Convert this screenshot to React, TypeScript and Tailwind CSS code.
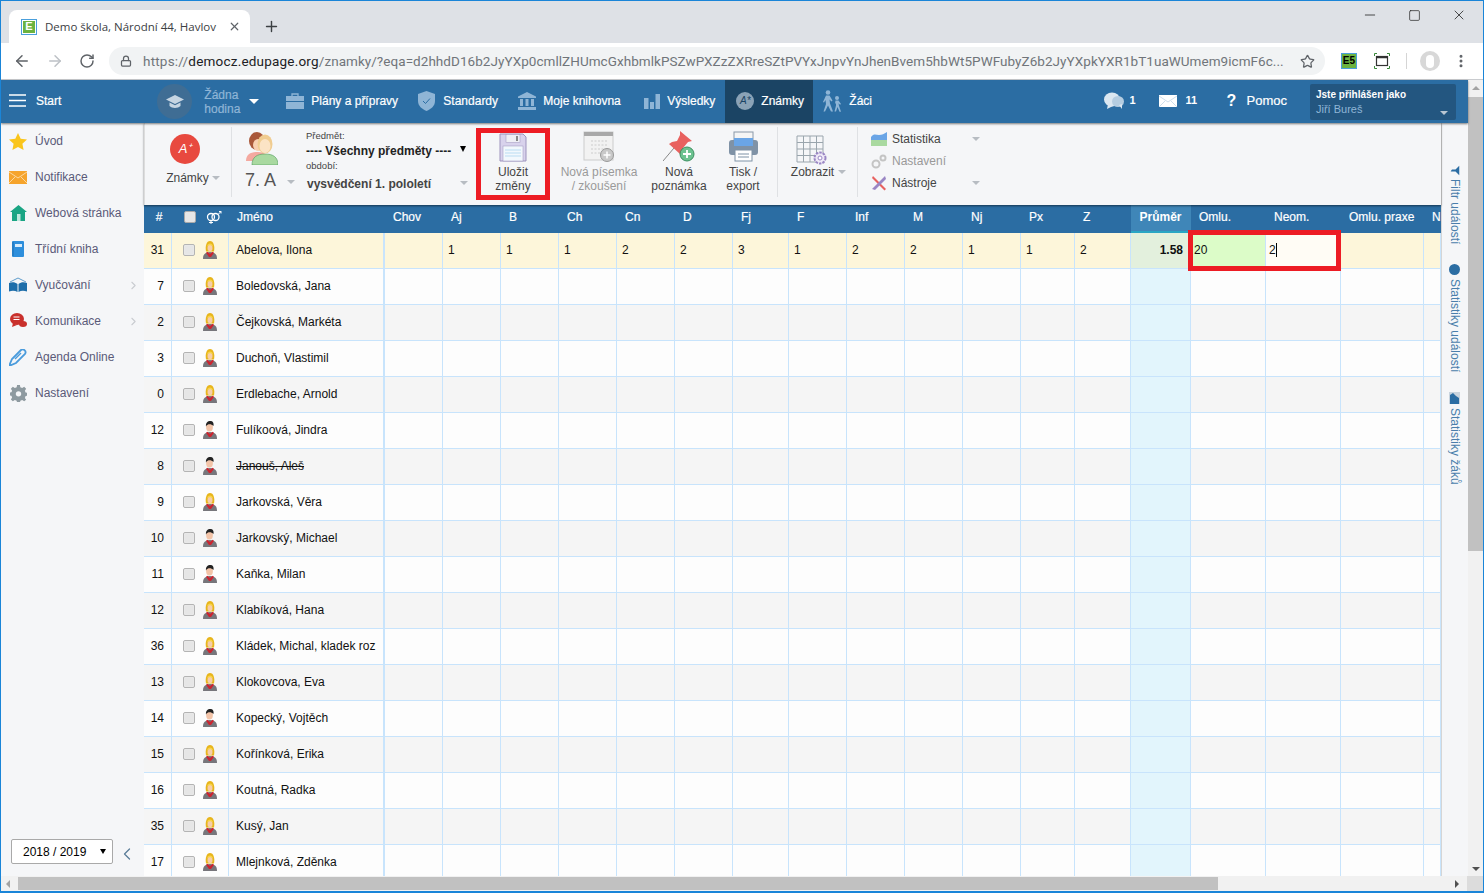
import { ArrowLeft, ArrowRight, ChevronLeft, ChevronRight, Lock, MoreVertical, Plus, RotateCw, Star, X, Minus, Square } from "lucide-react";

const sans = "font-['Liberation_Sans',Arial,sans-serif]";

const gridCols =
  "grid grid-cols-[28px_57px_156px_58px_58px_58px_58px_58px_58px_56px_58px_58px_58px_58px_54px_56px_60px_75px_75px_83px_17px]";

const subjects = ["Chov", "Aj", "B", "Ch", "Cn", "D", "Fj", "F", "Inf", "M", "Nj", "Px", "Z"];
const grades = ["", "1", "1", "1", "2", "2", "3", "1", "2", "2", "1", "1", "2"];

const students: { n: string; name: string; male?: boolean; strike?: boolean }[] = [
  { n: "7", name: "Boledovská, Jana" },
  { n: "2", name: "Čejkovská, Markéta" },
  { n: "3", name: "Duchoň, Vlastimil" },
  { n: "0", name: "Erdlebache, Arnold" },
  { n: "12", name: "Fulíkoová, Jindra", male: true },
  { n: "8", name: "Janouš, Aleš", male: true, strike: true },
  { n: "9", name: "Jarkovská, Věra" },
  { n: "10", name: "Jarkovský, Michael", male: true },
  { n: "11", name: "Kaňka, Milan", male: true },
  { n: "12", name: "Klabíková, Hana" },
  { n: "36", name: "Kládek, Michal, kladek roz" },
  { n: "13", name: "Klokovcova, Eva" },
  { n: "14", name: "Kopecký, Vojtěch", male: true },
  { n: "15", name: "Kořínková, Erika" },
  { n: "16", name: "Koutná, Radka" },
  { n: "35", name: "Kusý, Jan" },
  { n: "17", name: "Mlejnková, Zděnka" },
];

function Person({ male }: { male?: boolean }) {
  return (
    <svg width="14" height="18" viewBox="0 0 14 18">
      {male ? (
        <>
          <ellipse cx="6.500" cy="6" rx="3.400" ry="4.500" fill="#f3c4a8" />
          <path d="M3 5.500C2.500 2 4.500 0 7.500 0c2.500 0 3.500 2 3 5C9 3.500 7 3 5 3.500 4 4 3.500 4.500 3 5.500z" fill="#222" />
        </>
      ) : (
        <>
          <path d="M3 10.500C2 5 3.500 0 7 0s5 5 4 10.500z" fill="#e8b51c" />
          <ellipse cx="7" cy="7" rx="2.500" ry="3.300" fill="#f6cdaa" />
          <path d="M4 5.500C5 4 8 3.500 10 5.500 9.500 1.500 4.500 1.500 4 5.500z" fill="#f7d64a" />
        </>
      )}
      <path d="M0 18c0-4.500 1.500-6.500 7-7 5.500.5 7 2.500 7 7z" fill="#77767b" />
      <path d="M4.500 10.800L7 13l2.500-2.200 1.500 1L8 16H6L3 11.800z" fill="#cc2530" />
    </svg>
  );
}

function Check() {
  return (
    <span className="block w-[12px] h-[12px] rounded-[2px] border border-[#b4b4b4] bg-[#e6e6e6] shadow-[inset_0_0_1px_#fff]" />
  );
}

function Caret({ className = "" }: { className?: string }) {
  return (
    <span
      className={`inline-block w-0 h-0 border-l-[4px] border-r-[4px] border-t-[4px] border-l-transparent border-r-transparent border-t-[#b7bcc2] ${className}`}
    />
  );
}

function BrowserBar() {
  return (
    <div className="shrink-0">
      <div className="h-[42px] bg-[#dee1e6] flex items-end pl-[8px] relative">
        <div className="w-[241px] h-[33px] bg-white rounded-t-[8px] flex items-center pl-[12px] pr-[9px]">
          <span className="w-[16px] h-[16px] bg-[#4a9fdc] p-[1px] shrink-0">
            <span className={`flex items-center justify-center w-full h-full bg-[#6cb33f] border border-white text-white text-[11px] font-bold leading-none ${sans}`}>E</span>
          </span>
          <span className="ml-[8px] text-[11.500px] text-[#3c4043] font-['Open_Sans',sans-serif] whitespace-nowrap">Demo škola, Národní 44, Havlov</span>
          <X size={13} strokeWidth={2.2} className="text-[#5f6368] ml-auto shrink-0" />
        </div>
        <Plus size={17} strokeWidth={2} className="text-[#3c4043] ml-[13px] mb-[8px]" />
        <div className="ml-auto self-start flex items-center pt-[6px] pr-[16px] gap-[30px] text-[#222]">
          <Minus size={16} strokeWidth={1.2} />
          <Square size={13} strokeWidth={1.3} />
          <X size={16} strokeWidth={1.2} />
        </div>
      </div>
      <div className="h-[37px] bg-white flex items-center pl-[12px] border-b border-[#c9cbce]">
        <ArrowLeft size={18} strokeWidth={2} className="text-[#5f6368]" />
        <ArrowRight size={18} strokeWidth={2} className="text-[#bdc1c6] ml-[15px]" />
        <RotateCw size={16} strokeWidth={2.2} className="text-[#5f6368] ml-[15px]" />
        <div className="ml-[14px] w-[1216px] h-[28px] rounded-full bg-[#f1f3f4] flex items-center pl-[11px] pr-[10px]">
          <Lock size={12} strokeWidth={2.5} className="text-[#5f6368] shrink-0" />
          <span className="ml-[11px] text-[13.500px] tracking-[0.2px] text-[#70757a] font-['Roboto',sans-serif] whitespace-nowrap">
            https://<span className="text-[#202124]">democz.edupage.org</span>
            <span className="tracking-[0.05px]">/znamky/?eqa=d2hhdD16b2JyYXp0cmllZHUmcGxhbmlkPSZwPXZzZXRreSZtPVYxJnpvYnJhenBvem5hbWt5PWFubyZ6b2JyYXpkYXR1bT1uaWUmem9icmF6c...</span>
          </span>
          <Star size={15} strokeWidth={2} className="text-[#5f6368] ml-auto shrink-0" />
        </div>
        <span className={`ml-[16px] w-[16px] h-[16px] bg-[#6cb33f] border border-[#4a9fdc] text-[10px] font-bold leading-[14px] text-right pr-[1px] text-black ${sans}`}>E5</span>
        <svg width="16" height="16" viewBox="0 0 16 16" className="ml-[17px]">
          <path d="M.5 3V.5H3M13 .5h2.500V3M.5 13v2.500H3M13 15.500h2.500V13" fill="none" stroke="#3c8a3c" />
          <rect x="2.500" y="3.500" width="11" height="9" fill="none" stroke="#333" strokeWidth="1.200" />
          <path d="M2.500 4.500h11" stroke="#333" strokeWidth="1.500" />
        </svg>
        <span className="ml-[16px] w-px h-[16px] bg-[#d5d5d5]" />
        <span className="ml-[13px] w-[20px] h-[20px] rounded-full bg-[#d8d8d8] flex items-center justify-center">
          <span className="w-[8px] h-[13px] rounded-full bg-white" />
        </span>
        <MoreVertical size={16} strokeWidth={2.5} className="text-[#5f6368] ml-[13px]" />
      </div>
    </div>
  );
}

const navIcon = "#8fb5d6";

function NavItem({ icon, label, className = "" }: { icon: React.ReactNode; label: string; className?: string }) {
  return (
    <div className={`flex items-center h-full pb-[2px] ${className}`}>
      {icon}
      <span className="text-white text-[12px] [-webkit-text-stroke:0.2px_white] whitespace-nowrap">{label}</span>
    </div>
  );
}

function TopNav() {
  return (
    <div className={`h-[43px] shrink-0 bg-[#2b6da3] flex items-center shadow-[0_1px_2px_rgba(0,0,0,0.5)] relative z-10 ${sans}`}>
      <div className="w-[8px]" />
      <svg width="17" height="13" viewBox="0 0 17 13" className="shrink-0 mb-[2px]">
        <path d="M0 1h17M0 6.500h17M0 12h17" stroke="#fff" strokeWidth="1.500" />
      </svg>
      <span className="ml-[10px] mb-[2px] text-white text-[12px] [-webkit-text-stroke:0.2px_white]">Start</span>
      <div className="ml-[96px] w-[35px] h-[35px] rounded-full bg-[#3f6d94] flex items-center justify-center shrink-0">
        <svg width="18" height="14" viewBox="0 0 18 14">
          <path d="M9 0L18 4.500 9 9 0 4.500z" fill="#c6d5e2" />
          <path d="M3.500 7.500v3.500C6 13.500 12 13.500 14.500 11V7.500L9 10.300z" fill="#c6d5e2" />
        </svg>
      </div>
      <div className="ml-[12px] text-[12px] leading-[14px] text-[#8fb5d6] w-[45px] [-webkit-text-stroke:0.2px_#8fb5d6]">
        Žádna<br />hodina
      </div>
      <span className="w-0 h-0 border-l-[5px] border-r-[5px] border-t-[5px] border-l-transparent border-r-transparent border-t-white mr-[27px]" />
      <NavItem
        className="w-[132px]"
        label="Plány a přípravy"
        icon={
          <svg width="18" height="16" viewBox="0 0 18 16" className="mr-[7px]">
            <path d="M6 3V1h6v2" fill="none" stroke={navIcon} strokeWidth="1.300" />
            <path d="M0 3h18v5H0zM0 9h18v7H0z" fill={navIcon} />
          </svg>
        }
      />
      <NavItem
        className="w-[100px]"
        label="Standardy"
        icon={
          <svg width="17" height="20" viewBox="0 0 17 20" className="mr-[8px]">
            <path d="M8.500 0L17 3v7c0 5-4 8-8.500 10C4 18 0 15 0 10V3z" fill={navIcon} />
            <path d="M5 10l2.500 2.500L12 7.500" stroke="#2b6da3" fill="none" />
          </svg>
        }
      />
      <NavItem
        className="w-[126px]"
        label="Moje knihovna"
        icon={
          <svg width="18" height="18" viewBox="0 0 18 18" className="mr-[7px]">
            <path d="M9 0l9 4.500v1.500H0V4.500zM2 7h3v7H2zM7.500 7h3v7h-3zM13 7h3v7h-3zM0 15h18v3H0z" fill={navIcon} />
          </svg>
        }
      />
      <NavItem
        className="w-[81px]"
        label="Výsledky"
        icon={
          <svg width="16" height="16" viewBox="0 0 16 16" className="mr-[7px]">
            <path d="M0 5h4.500v11H0zM6 9h4v7H6zM11.500 1H16v15h-4.500z" fill={navIcon} />
          </svg>
        }
      />
      <div className="w-[88px] h-full bg-[#1b4464] flex items-center pl-[11px] pb-[2px]">
        <span className="w-[18px] h-[18px] rounded-full bg-[#8aa2b6] text-[#1b4464] text-[10px] italic flex items-center justify-center mr-[7px]">A*</span>
        <span className="text-white text-[12px] [-webkit-text-stroke:0.2px_white]">Známky</span>
      </div>
      <NavItem
        className="ml-[9px]"
        label="Žáci"
        icon={
          <svg width="20" height="22" viewBox="0 0 20 22" className="mr-[7px]">
            <circle cx="6" cy="2.500" r="2.300" fill={navIcon} />
            <circle cx="15" cy="8" r="2" fill={navIcon} />
            <path d="M4 5.500h3.500l3 5-1 1-2-2 .5 4 3 8H9l-3-6-3 6H1.500L4 14l-.5-4L2 12.500 1 12z" fill={navIcon} />
            <path d="M13.500 10.500h3l2.500 3.500-1 .7-1.500-1.500.5 2.500 2 6h-1.500L15.500 17 14 21.500h-1.500l1.500-6V13l-1 1z" fill={navIcon} />
          </svg>
        }
      />
      <div className="ml-auto flex items-center h-full">
        <svg width="20" height="18" viewBox="0 0 20 18" className="mr-[6px] mb-[2px]">
          <ellipse cx="8" cy="7.500" rx="8" ry="7" fill="#dbe7f1" />
          <ellipse cx="14" cy="9.500" rx="6" ry="5.500" fill="#b5cde1" />
          <path d="M4 12l-1 5 6-3zM15 13l3 4 0-5z" fill="#dbe7f1" />
        </svg>
        <span className="text-white text-[11px] font-bold w-[29px] mb-[2px]">1</span>
        <svg width="18" height="12" viewBox="0 0 18 12" className="mr-[9px] mb-[2px]">
          <rect width="18" height="12" fill="#fff" />
          <path d="M0 1l9 6 9-6M0 12l6-6M18 12l-6-6" stroke="#b9cfe2" fill="none" strokeWidth=".7" />
        </svg>
        <span className="text-white text-[11px] font-bold w-[41px] mb-[2px]">11</span>
        <span className="text-white text-[16px] font-bold w-[20px] mb-[2px]">?</span>
        <span className="text-white text-[13px] [-webkit-text-stroke:0.2px_white] mr-[23px] mb-[2px]">Pomoc</span>
        <div className="w-[146px] h-[36px] bg-[#235680] rounded-[2px] pl-[6px] pt-[4px] relative mr-[12px]">
          <div className="text-white text-[10px] font-bold leading-[14px]">Jste přihlášen jako</div>
          <div className="text-[#8fb5d6] text-[11px] leading-[14px]">Jiří Bureš</div>
          <span className="absolute right-[8px] bottom-[5px] w-0 h-0 border-l-[4px] border-r-[4px] border-t-[4px] border-l-transparent border-r-transparent border-t-[#b9c6d2]" />
        </div>
      </div>
    </div>
  );
}

function SideItem({ icon, label, arrow }: { icon: React.ReactNode; label: string; arrow?: boolean }) {
  return (
    <div className="h-[36px] flex items-center relative">
      <span className="w-[18px] h-[18px] flex items-center justify-center ml-[8px] mr-[8px]">{icon}</span>
      <span className="text-[12px] text-[#5a5a78]">{label}</span>
      {arrow && <ChevronRight size={13} className="absolute right-[4px] text-[#c9ccd0]" />}
    </div>
  );
}

function Sidebar() {
  return (
    <div className={`w-[143px] shrink-0 bg-[#f5f6f8] flex flex-col relative ${sans}`}>
      <SideItem
        label="Úvod"
        icon={<svg width="18" height="17" viewBox="0 0 18 17"><path d="M9 0l2.700 5.700 6.300.8-4.600 4.300 1.200 6.200L9 14l-5.600 3 1.200-6.200L0 6.500l6.300-.8z" fill="#fac51c" /></svg>}
      />
      <SideItem
        label="Notifikace"
        icon={<svg width="18" height="13" viewBox="0 0 18 13"><rect width="18" height="13" fill="#f6a42c" /><path d="M0 1l9 6 9-6M0 12l6-6M18 12l-6-6" stroke="#fde6bf" fill="none" strokeWidth=".8" /></svg>}
      />
      <SideItem
        label="Webová stránka"
        icon={<svg width="17" height="16" viewBox="0 0 17 16"><path d="M8.500 0L17 7h-2v9H2V7H0z" fill="#1aa584" /><rect x="7" y="9" width="3.500" height="7" fill="#bfe8dd" /></svg>}
      />
      <SideItem
        label="Třídní kniha"
        icon={<svg width="12" height="16" viewBox="0 0 12 16"><rect width="12" height="16" rx="1" fill="#2e8fdc" /><rect x="3" y="3" width="7" height="3" fill="#d8ecfb" /><path d="M1 1v14" stroke="#1c6fb3" /></svg>}
      />
      <SideItem
        label="Vyučování"
        arrow
        icon={<svg width="18" height="16" viewBox="0 0 18 16"><path d="M1 5l8-4 8 4" stroke="#5e9ccb" fill="none" /><path d="M0 6c3-1 6-1 8.500 1v8C6 13.500 3 13.500 0 14.500zM18 6c-3-1-6-1-8.500 1v8c2.500-1.500 5.500-1.500 8.500-.5z" fill="#1e6eaa" /></svg>}
      />
      <SideItem
        label="Komunikace"
        arrow
        icon={<svg width="17" height="16" viewBox="0 0 17 16"><ellipse cx="7" cy="6" rx="7" ry="6" fill="#c9302c" /><path d="M3 10l-1 4 5-2z" fill="#c9302c" /><ellipse cx="13" cy="11" rx="4" ry="3" fill="#c9302c" /><path d="M3.500 4h6M3.500 6.500h6" stroke="#fff" /></svg>}
      />
      <SideItem
        label="Agenda Online"
        icon={<svg width="18" height="17" viewBox="0 0 18 17"><path d="M0 17l3-7L12 1c2-2 6 1 4 4l-9 9z" fill="none" stroke="#4a9bdc" strokeWidth="1.800" /><path d="M6 10l6-6" stroke="#4a9bdc" strokeWidth="1.500" /></svg>}
      />
      <SideItem
        label="Nastavení"
        icon={<svg width="17" height="17" viewBox="0 0 24 24"><path d="M10 0h4l.6 3.200 2.600 1.100L20 2.500 22.800 5.300 21 8l1 2.600 3 .4v4l-3 .6-1 2.600 1.800 2.700L20 23l-2.800-1.800-2.600 1L14 25h-4l-.6-2.800-2.600-1L4 23 1.200 20.500 3 17.800 2 15.200l-3-.6v-4l3-.4L3 8 1.200 5.300 4 2.500l2.800 1.800 2.600-1.100z" fill="#8e9aa0" /><circle cx="12" cy="12.500" r="3.800" fill="#f5f6f8" /></svg>}
      />
      <div className="mt-auto mb-[12px] flex items-center pl-[10px]">
        <div className="w-[102px] h-[25px] bg-white border border-[#a9a9a9] rounded-[2px] flex items-center pl-[11px] text-[12px] text-black">
          2018 / 2019
          <span className="ml-auto mr-[6px] w-0 h-0 border-l-[3.500px] border-r-[3.500px] border-t-[5px] border-l-transparent border-r-transparent border-t-black" />
        </div>
        <ChevronLeft size={20} strokeWidth={1.5} className="text-[#5a7d99] ml-[4px] mt-[5px]" />
      </div>
    </div>
  );
}

function RibbonBtn({ icon, lines, gray, className = "" }: { icon: React.ReactNode; lines: string[]; gray?: boolean; className?: string }) {
  return (
    <div className={`flex flex-col items-center text-[12px] leading-[14px] pt-[3px] ${gray ? "text-[#9a9a9a]" : "text-[#444]"} ${className}`}>
      <div className="h-[32px] flex items-end justify-center">{icon}</div>
      <div className="text-center mt-[3px] whitespace-nowrap">
        {lines.map((l) => (
          <div key={l}>{l}</div>
        ))}
      </div>
    </div>
  );
}

function Ribbon() {
  return (
    <div className={`h-[82px] bg-[#f5f6f8] shrink-0 flex pt-[4px] shadow-[0_1px_2px_rgba(0,0,0,0.5)] relative z-[5] border-l border-[#ddd] ${sans}`}>
      <div className="w-[87px] h-[70px] flex flex-col items-center pt-[7px] pr-[6px] border-r border-[#dfe1e4] text-[12px] text-[#444]">
        <div className="w-[30px] h-[30px] rounded-full bg-[#e8493f] text-white text-[13px] italic flex items-center justify-center">A⁺</div>
        <div className="mt-[5px] ml-[16px] flex items-center gap-[3px]">
          Známky <Caret />
        </div>
      </div>
      <div className="w-[72px] pl-[14px] pt-[4px] relative">
        <svg width="32" height="34" viewBox="0 0 32 34">
          <path d="M0 30c0-7 5-9 12-9s10 3 10 9z" fill="#f4a9a0" />
          <ellipse cx="11" cy="10" rx="8" ry="9" fill="#a9583a" />
          <ellipse cx="12" cy="14" rx="5" ry="6" fill="#f8d0b0" />
          <path d="M6 34c0-8 5-11 13-11s13 3 13 11z" fill="#a9d9a0" stroke="#4f9a5a" strokeWidth=".6" />
          <ellipse cx="19" cy="13" rx="7.500" ry="9.500" fill="#f0cc90" />
          <ellipse cx="19" cy="15" rx="5.500" ry="7" fill="#fbe3c5" />
        </svg>
        <div className="flex items-center text-[18px] leading-[20px] text-[#555] mt-[5px] -ml-[1px] whitespace-nowrap">
          7. A <Caret className="ml-[11px] mt-[3px]" />
        </div>
      </div>
      <div className="w-[170px] ml-[2px] text-[#444] relative">
        <div className="text-[9.500px] leading-[10px] mt-[4px]">Předmět:</div>
        <div className="text-[12px] font-bold text-[#222] leading-[14px] mt-[3px]">---- Všechny předměty ----</div>
        <span className="absolute right-[10px] top-[19px] w-0 h-0 border-l-[3.500px] border-r-[3.500px] border-t-[6px] border-l-transparent border-r-transparent border-t-black" />
        <div className="text-[9.500px] leading-[10px] mt-[3px]">období:</div>
        <div className="text-[12px] font-bold text-[#444] leading-[14px] mt-[6px] pl-[1px]">vysvědčení 1. pololetí</div>
        <Caret className="absolute right-[8px] top-[54px]" />
      </div>
      <RibbonBtn
        className="w-[74px]"
        lines={["Uložit", "změny"]}
        icon={
          <svg width="28" height="29" viewBox="0 0 28 29">
            <path d="M1 1h23l3 3v24H1z" fill="#d8d2ec" stroke="#9d93bd" />
            <rect x="7" y="1.500" width="14" height="8" fill="#efeff5" stroke="#9d93bd" strokeWidth=".5" />
            <rect x="17" y="3" width="2" height="5" fill="#888" />
            <rect x="4" y="13" width="20" height="15" fill="#f2f8fd" stroke="#9d93bd" strokeWidth=".5" />
            <path d="M6 17h16M6 20h16M6 23h16" stroke="#b9dcf2" />
          </svg>
        }
      />
      <RibbonBtn
        className="w-[98px]"
        gray
        lines={["Nová písemka", "/ zkoušení"]}
        icon={
          <svg width="32" height="31" viewBox="0 0 32 31">
            <rect x="1" y="1" width="29" height="28" fill="#f2f2f2" stroke="#ccc" />
            <rect x="1" y="1" width="29" height="4" fill="#a9a9a9" />
            <path d="M8 10h16M8 14h16M8 18h14M8 22h10" stroke="#ccc" strokeDasharray="2 1.500" />
            <circle cx="24" cy="24" r="6.500" fill="#c9c9c9" stroke="#999" />
            <path d="M24 20.500v7M20.500 24h7" stroke="#fff" strokeWidth="1.500" />
          </svg>
        }
      />
      <RibbonBtn
        className="w-[62px]"
        lines={["Nová", "poznámka"]}
        icon={
          <svg width="32" height="32" viewBox="0 0 32 32">
            <path d="M0 31l11-13" stroke="#888" />
            <path d="M17 1l12 10-4 1-5 6 0 5-3 1L6 14l3-2 5-1 3-6z" fill="#e8615f" />
            <circle cx="24" cy="24" r="7" fill="#6cc290" stroke="#3c9060" />
            <path d="M24 20v8M20 24h8" stroke="#fff" strokeWidth="1.800" />
          </svg>
        }
      />
      <RibbonBtn
        className="w-[66px]"
        lines={["Tisk /", "export"]}
        icon={
          <svg width="31" height="31" viewBox="0 0 31 31">
            <rect x="6" y="1" width="19" height="10" fill="#f5f5f5" stroke="#8a98a8" />
            <rect x="1" y="9" width="29" height="15" rx="3" fill="#7f92a6" />
            <rect x="6" y="7" width="19" height="8" fill="#6aa5e6" />
            <rect x="7" y="19" width="17" height="11" fill="#fff" stroke="#7f92a6" />
            <path d="M10 23h11M10 26h11" stroke="#7f92a6" />
          </svg>
        }
      />
      <div className="w-[81px] h-[70px] ml-[1px] border-l border-[#dfe1e4] border-r flex flex-col items-center text-[12px] text-[#444] pt-[8px]">
        <svg width="31" height="30" viewBox="0 0 31 30" className="mr-[12px]">
          <path d="M1 1h26v26H1zM1 7.500h26M1 14h26M1 20.500h26M7.500 1v26M14 1v26M20.500 1v26" fill="none" stroke="#9aa5ad" />
          <circle cx="24" cy="23" r="5.500" fill="#efe9f7" stroke="#9a86c4" strokeWidth="2" strokeDasharray="2.500 1" />
          <circle cx="24" cy="23" r="2" fill="#fff" stroke="#9a86c4" />
        </svg>
        <div className="-mt-[2px] ml-[2px] flex items-center gap-[4px]">
          Zobrazit <Caret />
        </div>
      </div>
      <div className="ml-[13px] text-[12px] text-[#444] w-[109px] flex flex-col gap-[8px]">
        <div className="flex items-center h-[14px] mt-[5px]">
          <svg width="16" height="14" viewBox="0 0 16 14" className="mr-[5px]">
            <path d="M0 5c3-4 5-2 8-2s5-1 8-3v8H0z" fill="#6aa5e6" />
            <path d="M0 8h16v6H0z" fill="#a9d9a0" />
          </svg>
          Statistika <Caret className="ml-auto" />
        </div>
        <div className="flex items-center h-[14px] text-[#999]">
          <svg width="16" height="15" viewBox="0 0 16 15" className="mr-[5px]">
            <circle cx="5" cy="10" r="3.500" fill="none" stroke="#c4c4c4" strokeWidth="2" />
            <circle cx="12" cy="4" r="2.500" fill="none" stroke="#c4c4c4" strokeWidth="2" />
          </svg>
          Nastavení
        </div>
        <div className="flex items-center h-[14px]">
          <svg width="16" height="16" viewBox="0 0 16 16" className="mr-[5px]">
            <path d="M2 1l13 13-1.500 1.500L1 3z" fill="#e8615f" />
            <path d="M14 1l1 3-11 11-3-1z" fill="#9a86c4" />
          </svg>
          Nástroje <Caret className="ml-auto" />
        </div>
      </div>
    </div>
  );
}

function HeaderRow() {
  return (
    <div className={`${gridCols} h-[28px] bg-[#2b6da3] text-white text-[12px] [-webkit-text-stroke:0.2px_white] items-center whitespace-nowrap overflow-hidden`}>
      <div className="text-center pl-[2px] pb-[4px]">#</div>
      <div className="flex items-center pl-[12px] h-full pb-[4px]">
        <span className="w-[12px] h-[12px] rounded-[2px] bg-[#e6e6e6] border border-[#aaa]" />
        <svg width="16" height="13" viewBox="0 0 16 13" className="ml-[10px]">
          <circle cx="5" cy="6" r="3.500" fill="none" stroke="#fff" strokeWidth="1.300" />
          <circle cx="9.500" cy="6" r="3.500" fill="none" stroke="#fff" strokeWidth="1.300" />
          <path d="M5 9.500V13M3 11.500h4M12 3.500L15 .5M13 .5h2v2" fill="none" stroke="#fff" />
        </svg>
      </div>
      <div className="pl-[8px] pb-[4px]">Jméno</div>
      {subjects.map((s) => (
        <div key={s} className="pl-[8px] pb-[4px]">{s}</div>
      ))}
      <div className="h-full bg-[#3f86b8] border-b-2 border-[#2aa6c4] flex items-center justify-center font-bold pb-[2px] pr-[1px] [-webkit-text-stroke:0]">Průměr</div>
      <div className="pl-[8px] pb-[4px]">Omlu.</div>
      <div className="pl-[8px] pb-[4px]">Neom.</div>
      <div className="pl-[8px] pb-[4px]">Omlu. praxe</div>
      <div className="pl-[8px] pb-[4px]">N</div>
    </div>
  );
}

const cell = "border-r border-b border-[#c8e4fc] h-full";

function Row({ n, name, male, strike, index }: { n: string; name: string; male?: boolean; strike?: boolean; index: number }) {
  const bg = index % 2 === 0 ? "bg-[#fdfdfd]" : "bg-[#f5f5f5]";
  return (
    <div className={`${gridCols} h-[36px] ${bg} text-[12px] text-[#111] items-center whitespace-nowrap overflow-hidden`}>
      <div className={`${cell} flex items-center justify-end pr-[7px] pb-[2px]`}>{n}</div>
      <div className={`${cell} flex items-center pl-[11px] pb-[1px]`}>
        <Check />
        <span className="ml-[8px] flex"><Person male={male} /></span>
      </div>
      <div className={`${cell} border-r-2 flex items-center pl-[7px] pb-[2px] ${strike ? "line-through" : ""}`}>{name}</div>
      {subjects.map((s) => (
        <div key={s} className={cell} />
      ))}
      <div className={`${cell} bg-[#e2f5fc]`} />
      <div className={cell} />
      <div className={cell} />
      <div className={cell} />
      <div className={cell} />
    </div>
  );
}

function ActiveRow() {
  return (
    <div className={`${gridCols} h-[36px] bg-[#fdf6da] text-[12px] text-[#111] items-center whitespace-nowrap overflow-hidden`}>
      <div className={`${cell} flex items-center justify-end pr-[7px] pb-[2px]`}>31</div>
      <div className={`${cell} flex items-center pl-[11px] pb-[1px]`}>
        <Check />
        <span className="ml-[8px] flex"><Person /></span>
      </div>
      <div className={`${cell} border-r-2 flex items-center pl-[7px] pb-[2px]`}>Abelova, Ilona</div>
      {grades.map((g, i) => (
        <div key={i} className={`${cell} flex items-center pl-[5px] pb-[2px]`}>{g}</div>
      ))}
      <div className={`${cell} bg-[#e3f0dd] flex items-center justify-end pr-[7px] pb-[2px] font-bold`}>1.58</div>
      <div className={`${cell} bg-[#dcfcc8] flex items-center pl-[3px] pb-[2px]`}>20</div>
      <div className={`${cell} bg-[#fffcf5] flex items-center pl-[3px] pb-[2px]`}>
        2<span className="w-px h-[14px] bg-black" />
      </div>
      <div className={cell} />
      <div className={cell} />
    </div>
  );
}

function RightTabs() {
  const tab = "[writing-mode:vertical-rl] text-[12px] text-[#4a7eab] whitespace-nowrap flex items-center gap-[4px]";
  return (
    <div className={`w-[27px] shrink-0 bg-[#f5f6f8] border-l border-[#d5d5d5] flex flex-col items-center pr-[1px] pt-[43px] ${sans}`}>
      <div className={tab}>
        <svg width="10" height="9" viewBox="0 0 10 9" className="rotate-90"><path d="M0 0h10L6 4v5L4 7.500V4z" fill="#2b6da3" /></svg>
        Filtr událostí
      </div>
      <div className={`${tab} mt-[20px]`}>
        <svg width="11" height="11" viewBox="0 0 11 11"><circle cx="5.500" cy="5.500" r="5.500" fill="#2b6da3" /></svg>
        Statistiky událostí
      </div>
      <div className={`${tab} mt-[19px]`}>
        <svg width="11" height="12" viewBox="0 0 11 12"><rect width="11" height="12" fill="#c9d4de" /><path d="M1 12V3l3-2 3 3 3 2v6z" fill="#2b6da3" /></svg>
        Statistiky žáků
      </div>
    </div>
  );
}

function VScroll() {
  return (
    <div className="w-[15px] shrink-0 bg-[#f1f1f1] flex flex-col items-center relative">
      <span className="mt-[6px] w-0 h-0 border-l-[4px] border-r-[4px] border-b-[4px] border-l-transparent border-r-transparent border-b-[#a3a3a3]" />
      <div className="mt-[7px] w-full h-[454px] bg-[#c1c1c1]" />
      <span className="absolute bottom-[5px] w-0 h-0 border-l-[4px] border-r-[4px] border-t-[4px] border-l-transparent border-r-transparent border-t-[#505050]" />
    </div>
  );
}

function HScroll() {
  return (
    <div className="h-[15px] shrink-0 bg-[#f1f1f1] flex items-center relative">
      <span className="ml-[5px] w-0 h-0 border-t-[4px] border-b-[4px] border-r-[4px] border-t-transparent border-b-transparent border-r-[#a3a3a3]" />
      <div className="ml-[8px] w-[1200px] h-[13px] bg-[#c1c1c1]" />
      <span className="absolute right-[24px] w-0 h-0 border-t-[4px] border-b-[4px] border-l-[4px] border-t-transparent border-b-transparent border-l-[#505050]" />
      <div className="absolute right-0 top-0 w-[16px] h-full bg-[#dcdcdc]" />
    </div>
  );
}

export default function App() {
  return (
    <div className="w-[1484px] h-[893px] overflow-hidden border-x border-t border-b-2 border-[#1a85d8] flex flex-col relative bg-white">
      <BrowserBar />
      <div className="flex-1 flex flex-col min-h-0">
        <div className="flex-1 flex min-h-0">
          <div className="flex-1 flex flex-col min-w-0">
            <TopNav />
            <div className="flex-1 flex min-h-0">
              <Sidebar />
              <div className="flex-1 flex flex-col min-w-0">
                <Ribbon />
                <div className={`flex-1 overflow-hidden ${sans}`}>
                  <HeaderRow />
                  <ActiveRow />
                  {students.map((s, i) => (
                    <Row key={s.name} index={i} {...s} />
                  ))}
                </div>
              </div>
              <RightTabs />
            </div>
          </div>
          <VScroll />
        </div>
        <HScroll />
      </div>
      {/* red highlight boxes */}
      <div className="absolute z-20 left-[475px] top-[127px] w-[74px] h-[72px] border-[5px] border-[#ed1c24]" />
      <div className="absolute z-20 left-[1187px] top-[229px] w-[153px] h-[41px] border-[5px] border-[#ed1c24]" />
    </div>
  );
}
